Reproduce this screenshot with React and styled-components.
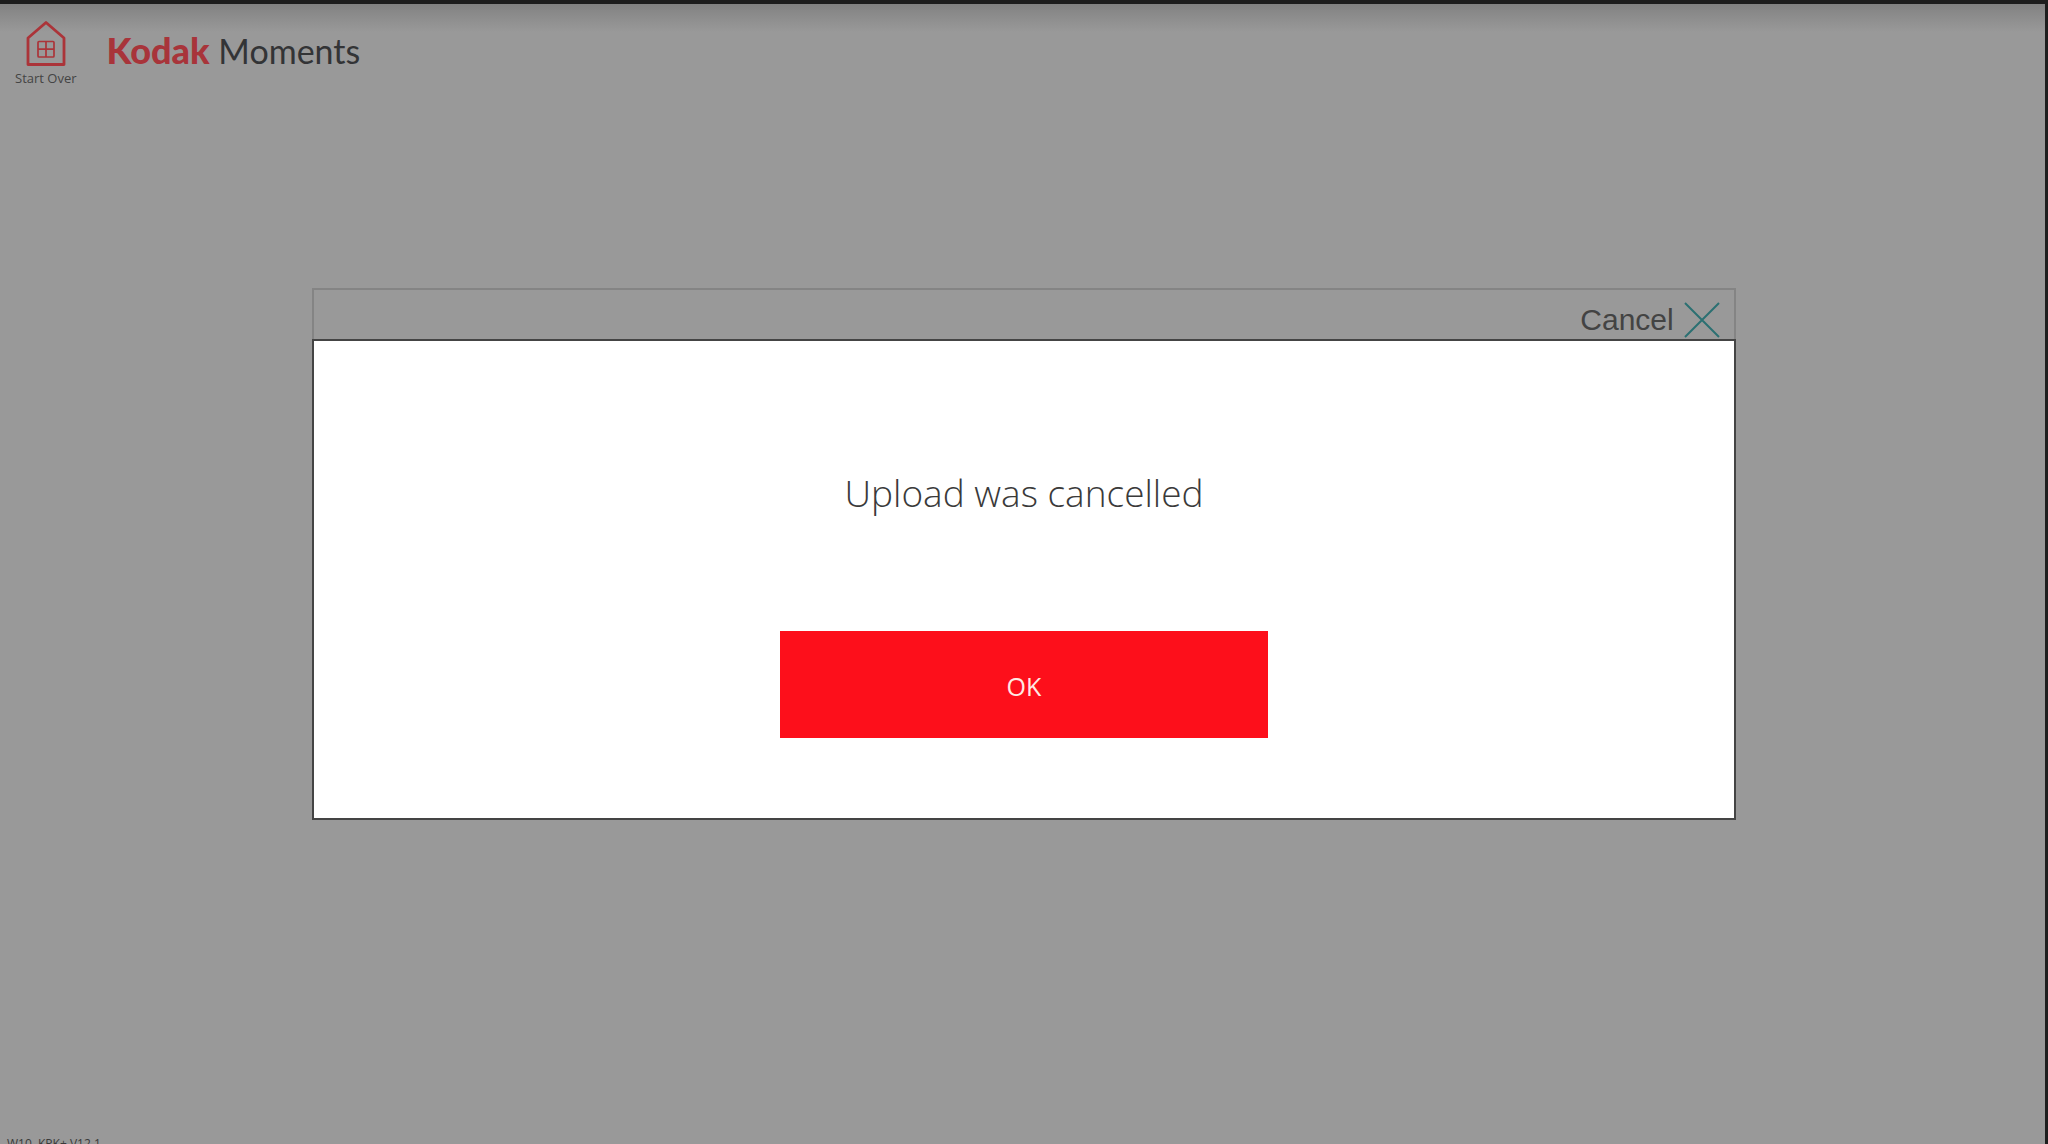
import React from "react";
import styled, { createGlobalStyle } from "styled-components";

const GlobalStyle = createGlobalStyle`
  * {
    box-sizing: border-box;
  }

  body {
    margin: 0;
    background-color: #999999;
    font-family: "Open Sans", "Noto Sans", sans-serif;
    color: #3a3a3a;
  }
`;

const Page = styled.div`
  display: flex;
  flex-direction: column;
  height: 100vh;
  overflow: hidden;
  border-top: 4px solid #1e1e1e;
  background: linear-gradient(#828282, #999999 28px);
`;

// dark strip over the right side of the window
const ScreenEdge = styled.div`
  position: fixed;
  top: 0;
  right: 0;
  bottom: 0;
  width: 3px;
  background-color: #1e1e1e;
`;

const Header = styled.header`
  display: flex;
  align-items: flex-start;
  gap: 30px;
  height: 284px;
  padding: 16px 15px;
`;

const StartOver = styled.button`
  display: flex;
  flex-direction: column;
  align-items: center;
  gap: 4px;
  padding: 0;
  border: 0;
  background: none;
  font-family: inherit;
  font-size: 13px;
  line-height: 16px;
  color: #444444;
`;

const Logo = styled.h1`
  margin: 8px 0 0;
  font-family: Lato, sans-serif;
  font-size: 34px;
  font-weight: 400;
  line-height: 44px;
  color: #333436;
`;

const Brand = styled.span`
  font-size: 36px;
  font-weight: 900;
  color: #a8343a;
`;

const Panel = styled.main`
  width: 69.5%;
  margin: 0 auto;
`;

const PanelBar = styled.div`
  display: flex;
  justify-content: flex-end;
  height: 51px;
  padding: 12px 14px 0 0;
  border: 2px solid #848484;
  border-bottom: 0;
`;

const CancelButton = styled.button`
  display: flex;
  align-items: center;
  gap: 10px;
  height: 36px;
  padding: 0;
  border: 0;
  background: none;
  font-family: "Liberation Sans", Arial, sans-serif;
  font-size: 30px;
  line-height: 36px;
  color: #434343;
`;

const Dialog = styled.section`
  display: flex;
  flex-direction: column;
  align-items: center;
  gap: 113px;
  padding: 127px 0 80px;
  border: 2px solid #444444;
  background-color: #ffffff;
`;

const Message = styled.p`
  margin: 0;
  font-size: 37px;
  font-weight: 300;
  line-height: 50px;
`;

const OkButton = styled.button`
  width: 34.4%;
  height: 107px;
  padding: 2px 0 0;
  border: 0;
  background-color: #fd0f1b;
  font-family: inherit;
  font-size: 25px;
  line-height: 32px;
  color: #ffe9e4;
`;

const Version = styled.footer`
  height: 8px;
  margin-top: auto;
  padding-left: 7px;
  font-size: 12px;
  line-height: 16px;
`;

function HouseIcon() {
  return (
    <svg width="40" height="46" viewBox="0 0 40 46" fill="none" stroke="#ab3439" aria-hidden="true">
      <path d="M2 44.5V18L20 2.5L38 18V44.5Z" strokeWidth="2.8" strokeLinejoin="round" />
      <rect x="12" y="21.5" width="16" height="15.5" rx="1" strokeWidth="1.7" />
      <path d="M20 21.5V37M12 29.2H28" strokeWidth="1.7" />
    </svg>
  );
}

function CrossIcon() {
  return (
    <svg width="36" height="36" viewBox="0 0 36 36" fill="none" stroke="#2b7072" aria-hidden="true">
      <path d="M1 1L35 35M35 1L1 35" strokeWidth="2" />
    </svg>
  );
}

export default function App() {
  return (
    <Page>
      <GlobalStyle />
      <Header>
        <StartOver type="button">
          <HouseIcon />
          Start Over
        </StartOver>
        <Logo>
          <Brand>Kodak</Brand> Moments
        </Logo>
      </Header>
      <Panel>
        <PanelBar>
          <CancelButton type="button">
            Cancel
            <CrossIcon />
          </CancelButton>
        </PanelBar>
        <Dialog role="alertdialog" aria-labelledby="message">
          <Message id="message">Upload was cancelled</Message>
          <OkButton type="button">OK</OkButton>
        </Dialog>
      </Panel>
      <Version>W10, KPK+ V12.1</Version>
      <ScreenEdge />
    </Page>
  );
}
